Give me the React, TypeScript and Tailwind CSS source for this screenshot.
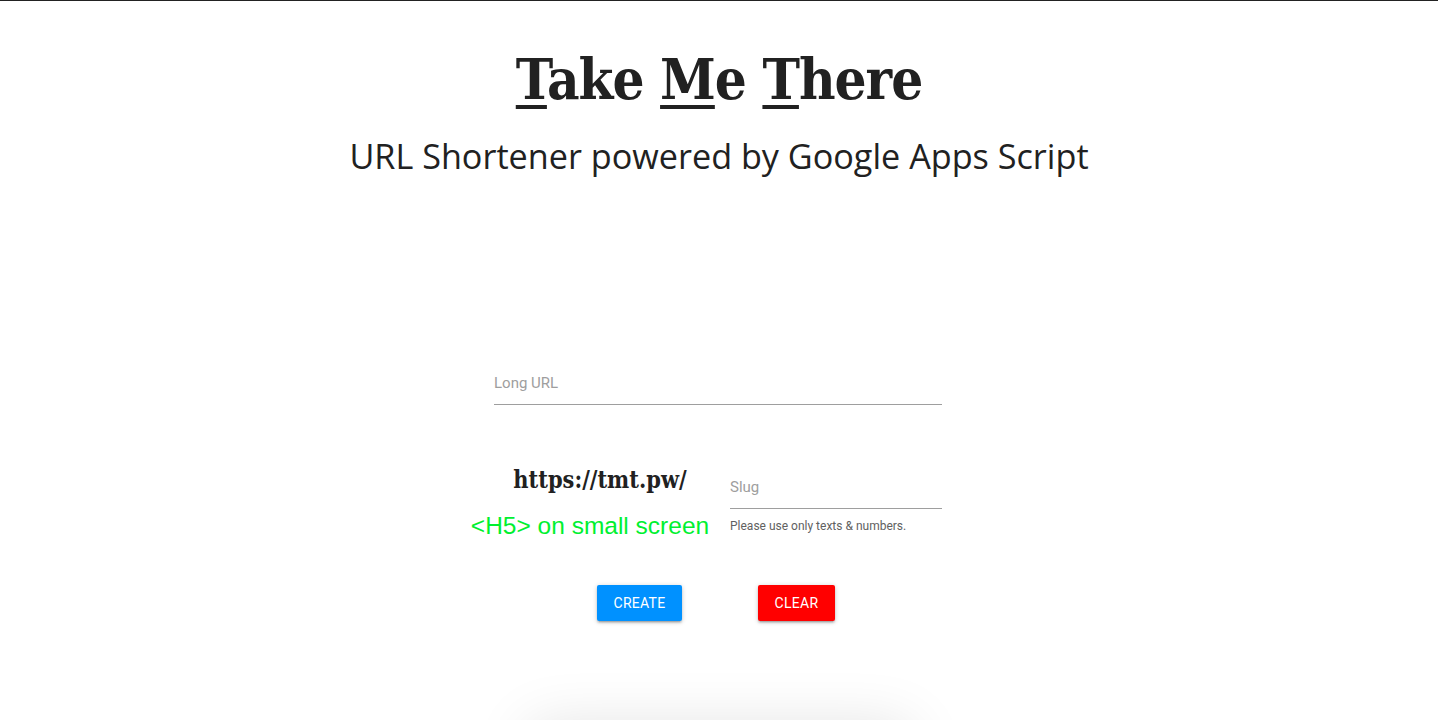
import React from "react";

export default function App() {
  return (
    <div className="min-h-[720px] bg-white border-t border-[#222] overflow-hidden relative">
      <div className="flex flex-col items-center">
        <h1 className="mt-[38px] h-[80px] flex items-center text-[56px] leading-none font-bold text-[#212121] font-['DejaVu_Serif_Condensed','DejaVu_Serif',serif] tracking-[-1px]">
          <span>
            <u className="underline decoration-[4px] underline-offset-[6px]">T</u>ake{" "}
            <u className="underline decoration-[4px] underline-offset-[6px]">M</u>e{" "}
            <u className="underline decoration-[4px] underline-offset-[6px]">T</u>here
          </span>
        </h1>
        <h2 className="mt-[17px] text-[34.2px] leading-[40px] text-[#212121] font-['Open_Sans',sans-serif]">
          URL Shortener powered by Google Apps Script
        </h2>
      </div>

      <div className="flex justify-center pr-[2px]">
        <div className="w-[448px] mt-[184px] font-['Roboto',sans-serif]">
          <div className="h-[45px] border-b border-[#9e9e9e] flex items-center text-[15px] text-[#9e9e9e]">
            <span className="mt-[3px]">Long URL</span>
          </div>

          <div className="mt-[56px] flex">
            <div className="w-[236px] flex flex-col items-center">
              <div className="mt-[4px] text-[23.3px] leading-[30px] font-bold text-[#212121] font-['DejaVu_Serif_Condensed','DejaVu_Serif',serif] pr-[24px] whitespace-nowrap">
                https://tmt.pw/
              </div>
              <div className="mt-[17px] text-[24.5px] leading-[28px] text-[#00f030] font-['Liberation_Sans',Arial,sans-serif] whitespace-nowrap pr-[44px]">
                &lt;H5&gt; on small screen
              </div>
            </div>
            <div className="w-[212px]">
              <div className="mt-[3px] h-[45px] border-b border-[#9e9e9e] flex items-center text-[15px] text-[#9e9e9e]">
                <span className="mt-[3px]">Slug</span>
              </div>
              <div className="mt-[8px] text-[12px] text-[#616161]">Please use only texts &amp; numbers.</div>
            </div>
          </div>

          <div className="mt-[45px] flex justify-center gap-[76px] pr-[4px]">
            <button className="h-[36px] w-[85px] rounded-[2px] bg-[#0091ff] text-white text-[14px] tracking-[0.3px] shadow-[0_2px_2px_0_rgba(0,0,0,0.14),0_3px_1px_-2px_rgba(0,0,0,0.12),0_1px_5px_0_rgba(0,0,0,0.2)]">
              CREATE
            </button>
            <button className="h-[36px] w-[77px] rounded-[2px] bg-[#ff0000] text-white text-[14px] tracking-[0.3px] shadow-[0_2px_2px_0_rgba(0,0,0,0.14),0_3px_1px_-2px_rgba(0,0,0,0.12),0_1px_5px_0_rgba(0,0,0,0.2)]">
              CLEAR
            </button>
          </div>
        </div>
      </div>

      <div className="absolute left-[540px] top-[735px] w-[360px] h-[100px] bg-white shadow-[0_0_60px_10px_rgba(0,0,0,0.12)]" />
    </div>
  );
}
